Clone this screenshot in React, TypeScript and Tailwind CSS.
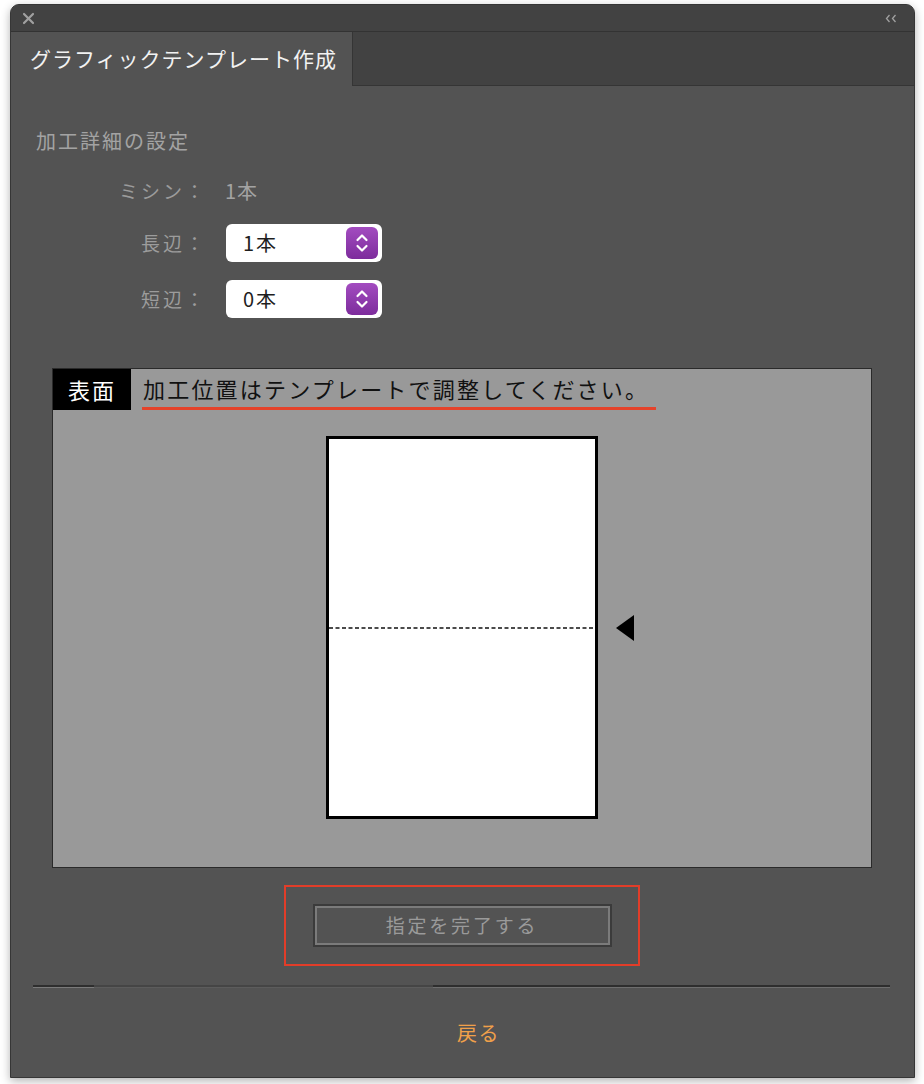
import React from "react";

function Stepper() {
  return (
    <div className="flex h-[32px] w-[32px] items-center justify-center rounded-[6px] bg-gradient-to-b from-[#a34cc0] to-[#7d2c9c]">
      <svg width="14" height="22" viewBox="0 0 14 22" fill="none" stroke="white" strokeWidth="2.2" strokeLinecap="round" strokeLinejoin="round">
        <path d="M2.5 8 L7 3.5 L11.5 8" />
        <path d="M2.5 14 L7 18.5 L11.5 14" />
      </svg>
    </div>
  );
}

function SelectBox({ value }: { value: string }) {
  return (
    <div className="ml-[19px] flex h-[38px] w-[156px] items-center justify-between rounded-[6px] bg-white pl-[17px] pr-[4px]">
      <span className="text-[20px] leading-none tracking-[2px] text-[#1e1e1e]">{value}</span>
      <Stepper />
    </div>
  );
}

export default function App() {
  return (
    <div className="min-h-[1084px] bg-white pl-[10px] pt-[4px] font-['Noto_Sans_CJK_JP',sans-serif]">
      <div className="flex h-[1074px] w-[905px] flex-col overflow-hidden rounded-t-[9px] border border-[#363636] bg-[#535353] shadow-[0_3px_10px_rgba(0,0,0,0.3)]">
        {/* タイトルバー */}
        <div className="flex h-[26px] items-center justify-between bg-[#424242] pl-[11px] pr-[17px]">
          <svg width="13" height="13" viewBox="0 0 13 13" stroke="#a0a0a0" strokeWidth="2.2" strokeLinecap="round">
            <path d="M2 2 L11 11 M11 2 L2 11" />
          </svg>
          <svg width="12" height="9" viewBox="0 0 12 9" fill="none" stroke="#a0a0a0" strokeWidth="1.3">
            <path d="M4.5 1 L1.5 4.5 L4.5 8" />
            <path d="M10.5 1 L7.5 4.5 L10.5 8" />
          </svg>
        </div>

        {/* タブ */}
        <div className="flex h-[55px] border-t border-[#333333]">
          <div className="flex w-[341px] items-center bg-[#535353] pl-[19px]">
            <span className="text-[21px] tracking-[1px] text-[#f2f2f2]">グラフィックテンプレート作成</span>
          </div>
          <div className="flex-1 border-b border-l border-[#353535] bg-[#424242]" />
        </div>

        {/* 加工詳細 */}
        <div className="mt-[41px] pl-[25px] text-[20px] leading-[28px] tracking-[2px] text-[#a3a3a3]">加工詳細の設定</div>

        <div className="mt-[17px] flex h-[38px] items-center">
          <div className="w-[196px] text-right text-[19px] tracking-[3px] text-[#9c9c9c]">ミシン：</div>
          <div className="ml-[18px] text-[20px] tracking-[1px] text-[#a3a3a3]">1本</div>
        </div>
        <div className="mt-[14px] flex h-[38px] items-center">
          <div className="w-[196px] text-right text-[19px] tracking-[3px] text-[#9c9c9c]">長辺：</div>
          <SelectBox value="1本" />
        </div>
        <div className="mt-[18px] flex h-[38px] items-center">
          <div className="w-[196px] text-right text-[19px] tracking-[3px] text-[#9c9c9c]">短辺：</div>
          <SelectBox value="0本" />
        </div>

        {/* プレビュー */}
        <div className="ml-[41px] mt-[50px] h-[500px] w-[820px] border border-[#2a2a2a] bg-[#999999]">
          <div className="flex h-[41px] items-stretch">
            <div className="flex w-[78px] items-center justify-center bg-black text-[22px] tracking-[2px] text-white">表面</div>
            <div className="ml-[11px] flex w-[514px] items-center border-b-[3px] border-[#e5432b]">
              <span className="pl-[1px] text-[22px] tracking-[2.2px] text-[#111111]">加工位置はテンプレートで調整してください。</span>
            </div>
          </div>
          <div className="mt-[26px] flex justify-center">
            <div className="relative">
              <div className="flex h-[383px] w-[272px] flex-col justify-center border-[3px] border-black bg-white">
                <svg width="266" height="2" viewBox="0 0 266 2">
                  <line x1="0" y1="1" x2="266" y2="1" stroke="#111" strokeWidth="1.6" strokeDasharray="4 2.5" />
                </svg>
              </div>
              <svg className="absolute left-[290px] top-[179px]" width="18" height="26" viewBox="0 0 18 26">
                <path d="M0 13 L18 0 L18 26 Z" fill="black" />
              </svg>
            </div>
          </div>
        </div>

        {/* 完了ボタン */}
        <div className="mt-[17px] flex justify-center pr-[1px]">
          <div className="flex h-[81px] w-[356px] items-center justify-center border-2 border-[#e23d29]">
            <div className="flex h-[43px] w-[299px] items-center justify-center border-2 border-[#3b3b3b] shadow-[inset_0_0_0_2px_#7b7b7b]">
              <span className="text-[19px] tracking-[2.8px] text-[#9a9a9a]">指定を完了する</span>
            </div>
          </div>
        </div>

        {/* 区切り */}
        <div className="ml-[22px] mt-[19px] flex w-[857px] flex-col">
          <div className="flex h-[2px]">
            <div className="w-[61px] bg-[#2e2e2e]" />
            <div className="w-[339px] bg-[#454545]" />
            <div className="flex-1 bg-[#2e2e2e]" />
          </div>
          <div className="flex h-[1px]">
            <div className="w-[61px] bg-[#7a7a7a]" />
            <div className="w-[339px] bg-[#5c5c5c]" />
            <div className="flex-1 bg-[#6e6e6e]" />
          </div>
        </div>

        <div className="mt-[31px] flex justify-center pl-[32px]">
          <span className="text-[20px] leading-[28px] tracking-[1.5px] text-[#f0a04a]">戻る</span>
        </div>
      </div>
    </div>
  );
}
